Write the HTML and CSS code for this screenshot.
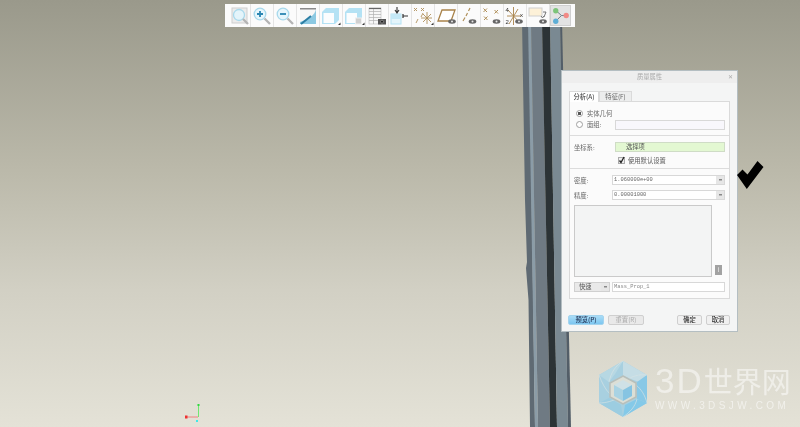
FILE: index.html
```html
<!DOCTYPE html>
<html lang="zh">
<head>
<meta charset="utf-8">
<title>质量属性</title>
<link rel="stylesheet" href="styles.css">
</head>
<body>
<main class="viewport">
  <svg class="model" width="60" height="427" viewBox="515 0 60 427">
    <polygon fill="#5f6a73" points="522,20 529,20 535,427 530,427 528.500,300 526,268 527,262 525,200"/>
    <polygon fill="#8b9ca7" points="528,20 531,20 538,427 535,427"/>
    <polygon fill="#6f7a83" points="531,20 542,20 550,427 538,427"/>
    <polygon fill="#2c3336" points="542,20 550,20 557,427 550,427"/>
    <polygon fill="#7a8992" points="550,20 560,20 568,427 557,427"/>
    <polygon fill="#535e68" points="560,20 562,20 571,427 568,427"/>
  </svg>

  <svg class="axes" width="20" height="22" viewBox="183 403 20 22">
    <line x1="186" y1="417" x2="198" y2="417" stroke="#f08080" stroke-width="1"/>
    <rect x="185" y="415.500" width="2.500" height="3" fill="#ee3030"/>
    <line x1="198.500" y1="405" x2="198.500" y2="417" stroke="#70e870" stroke-width="1"/>
    <rect x="197.500" y="404" width="2" height="2" fill="#30d840"/>
    <rect x="196" y="420" width="2" height="2" fill="#40e8e8"/>
  </svg>

  <nav class="toolbar">
    <span class="tool">
      <svg width="22" height="22" viewBox="0 0 22 22"><rect x="4" y="3" width="15" height="15" fill="#ececec" stroke="#cfcfcf"/><circle cx="11" cy="10" r="5.500" fill="#e4f4fa" stroke="#a8d9ec" stroke-width="1.300"/><line x1="15" y1="14" x2="20" y2="19" stroke="#b4b4b4" stroke-width="2.300"/></svg>
    </span>
    <span class="tool">
      <svg width="22" height="22" viewBox="0 0 22 22"><circle cx="9" cy="9" r="5.800" fill="#e6f6fc" stroke="#a8d9ec" stroke-width="1.300"/><path d="M6 9h6M9 6v6" stroke="#2a86b2" stroke-width="1.800"/><line x1="13.500" y1="13.500" x2="19" y2="19" stroke="#b4b4b4" stroke-width="2.300"/></svg>
    </span>
    <span class="tool">
      <svg width="22" height="22" viewBox="0 0 22 22"><circle cx="9" cy="9" r="5.800" fill="#e6f6fc" stroke="#a8d9ec" stroke-width="1.300"/><path d="M6 9h6" stroke="#2a86b2" stroke-width="1.800"/><line x1="13.500" y1="13.500" x2="19" y2="19" stroke="#b4b4b4" stroke-width="2.300"/></svg>
    </span>
    <span class="tool">
      <svg width="22" height="22" viewBox="0 0 22 22"><rect x="3" y="3" width="16" height="16" fill="#8cc9e2"/><path d="M3 4h16C18 10 12 14 3 17z" fill="#f6f6f6"/><path d="M3 3h16v1.500H3z" fill="#8a8a8a"/><path d="M4 19l10-8" stroke="#2b7da3" stroke-width="2"/></svg>
    </span>
    <span class="tool">
      <svg width="22" height="22" viewBox="0 0 22 22"><path d="M2 7l4-4h13v12l-4 4H2z" fill="#b4e2f4"/><rect x="3" y="7.500" width="11.500" height="11" fill="#fbfdfe" stroke="#b4e2f4"/><path d="M18 20l2.500-2.500V20z" fill="#333"/></svg>
    </span>
    <span class="tool">
      <svg width="22" height="22" viewBox="0 0 22 22"><path d="M2 7l4-4h13v12l-4 4H2z" fill="#b4e2f4"/><rect x="3" y="7.500" width="11.500" height="11" fill="#fbfdfe" stroke="#b4e2f4"/><rect x="12.500" y="13" width="6" height="6" fill="#d0d0d0" stroke="#eee"/><path d="M19 20l2.500-2.500V20z" fill="#333"/></svg>
    </span>
    <span class="tool">
      <svg width="22" height="22" viewBox="0 0 22 22"><rect x="3" y="3" width="12" height="16" fill="#f7f7f7" stroke="#c4c4c4" stroke-width=".7"/><path d="M3 3.500h12" stroke="#666" stroke-width="1.200"/><path d="M3 6.500h12M3 9.500h12M3 12.500h12M3 15.500h12M7.500 4v15" stroke="#b0b0b0" stroke-width=".7"/><rect x="12" y="14" width="8" height="5.500" fill="#555"/><circle cx="16" cy="16.700" r="1.500" fill="#222" stroke="#aaa" stroke-width=".6"/></svg>
    </span>
    <span class="tool">
      <svg width="22" height="22" viewBox="0 0 22 22"><rect x="2" y="9" width="10" height="10" fill="#e4f5fb" stroke="#b4e2f4"/><rect x="2" y="9" width="10" height="5" fill="#c4e8f6"/><path d="M8 2v5M6 5l2 3 2-3" stroke="#333" stroke-width="1.100" fill="none"/><path d="M14 11h5M14 9v4" stroke="#333" stroke-width="1.200"/></svg>
    </span>
    <span class="tool">
      <svg width="22" height="22" viewBox="0 0 22 22"><g stroke="#b0905a" stroke-width=".9" fill="none"><path d="M2 3l3 3M5 3L2 6M9 3l3 3M12 3L9 6M11 8l-2 4M6 14l-2 4"/><path d="M15 7v12M9 13h11M11 9l8 8M19 9l-8 8"/></g><path d="M19 20l2.500-2.500V20z" fill="#333"/></svg>
    </span>
    <span class="tool">
      <svg width="22" height="22" viewBox="0 0 22 22"><path d="M7 5h13l-4 11H3z" fill="#fff" stroke="#a9834a" stroke-width="1.300"/><ellipse cx="17" cy="16.500" rx="3.800" ry="2.200" fill="#666"/><circle cx="17" cy="16.500" r="1" fill="#e8e8e8"/></svg>
    </span>
    <span class="tool">
      <svg width="22" height="22" viewBox="0 0 22 22"><path d="M12 3l-1.500 3M9.500 8L8 11M7 12.500L5 16" stroke="#b0905a" stroke-width="1.200"/><ellipse cx="14.500" cy="16.500" rx="3.800" ry="2.200" fill="#666"/><circle cx="14.500" cy="16.500" r="1" fill="#e8e8e8"/></svg>
    </span>
    <span class="tool">
      <svg width="22" height="22" viewBox="0 0 22 22"><path d="M2.500 3.500l3.500 3.500M6 3.500L2.500 7M13.500 5l3.500 3.500M17 5l-3.500 3.500M3 11.500l3.500 3.500M6.500 11.500L3 15" stroke="#b0905a" stroke-width="1"/><ellipse cx="15.500" cy="16.500" rx="3.800" ry="2.200" fill="#666"/><circle cx="15.500" cy="16.500" r="1" fill="#e8e8e8"/></svg>
    </span>
    <span class="tool">
      <svg width="22" height="22" viewBox="0 0 22 22"><path d="M9.500 2v18M3 11h14M4 5l11 12M14 4L5 19" stroke="#a9834a" stroke-width=".9" fill="none"/><text x="1.500" y="7" class="icon-num">4</text><text x="1.500" y="19" class="icon-num">2</text><text x="16" y="12" class="icon-num">x</text><ellipse cx="15" cy="16.500" rx="3.800" ry="2.200" fill="#666"/><circle cx="15" cy="16.500" r="1" fill="#e8e8e8"/></svg>
    </span>
    <span class="tool">
      <svg width="22" height="22" viewBox="0 0 22 22"><rect x="2" y="3" width="13" height="8" fill="#fdf1d8" stroke="#cfcfcf"/><path d="M16 7h3l-2 5M17 11l-1.500 2-1.500-2" stroke="#666" stroke-width=".9" fill="none"/><ellipse cx="16" cy="16.500" rx="3.800" ry="2.200" fill="#666"/><circle cx="16" cy="16.500" r="1" fill="#e8e8e8"/></svg>
    </span>
    <span class="tool tool-active">
      <svg width="20" height="20" viewBox="0 0 20 20"><path d="M6 5l5 4.500-5 5M11 9.500h4" stroke="#6b7b86" stroke-width="1" fill="none"/><circle cx="5" cy="4.500" r="2.800" fill="#7dc47a"/><circle cx="16" cy="9.500" r="2.800" fill="#f28a86"/><circle cx="5" cy="15.500" r="2.800" fill="#5eaed6"/></svg>
    </span>
  </nav>

  <section class="dialog">
    <header class="dialog-title">
      <span class="dialog-name">质量属性</span>
      <span class="dialog-close">✕</span>
    </header>
    <div class="dialog-body">
      <div class="tabs">
        <span class="tab tab-on">分析(A)</span>
        <span class="tab">特征(F)</span>
      </div>
      <div class="panel">
        <div class="group group-a">
          <div class="row row-radio"><span class="radio radio-on"></span><span>实体几何</span></div>
          <div class="row row-radio"><span class="radio"></span><span class="radio-label">面组:</span><span class="field field-lilac"></span></div>
        </div>
        <div class="group group-b">
          <div class="row row-coord"><span class="label">坐标系:</span><span class="field field-green">选择项</span></div>
          <div class="row row-check">
            <svg class="check" width="7" height="8" viewBox="0 0 7 8"><rect x=".5" y="1.500" width="6" height="6" fill="#eee" stroke="#aaa"/><path d="M1.500 4.500L3 6.500 6 1" stroke="#222" stroke-width="1.300" fill="none"/></svg>
            <span>使用默认设置</span>
          </div>
        </div>
        <div class="group group-c">
          <div class="row row-select"><span class="label-short">密度:</span><span class="field field-select"><span class="value">1.060000e+00</span><span class="arrow"></span></span></div>
          <div class="row row-select"><span class="label-short">精度:</span><span class="field field-select"><span class="value">0.00001000</span><span class="arrow"></span></span></div>
          <div class="row row-output"><div class="output"></div><span class="info">i</span></div>
          <div class="row row-name"><span class="quick"><span class="quick-text">快速</span><span class="arrow"></span></span><span class="field field-name">Mass_Prop_1</span></div>
        </div>
      </div>
      <footer class="actions">
        <span class="btn btn-primary">预览(P)</span>
        <span class="btn btn-disabled">重置(R)</span>
        <span class="spacer"></span>
        <span class="btn btn-ok">确定</span>
        <span class="btn btn-cancel">取消</span>
      </footer>
    </div>
  </section>

  <svg class="tick" width="28" height="30" viewBox="736 160 28 30"><polygon fill="#000" points="737,175 742.500,169.500 747.500,174.500 757.500,161 763.500,167 746.800,189"/></svg>

  <div class="logo">
    <svg width="52" height="58" viewBox="0 0 52 58">
      <polygon points="26,1 50,15 50,43 26,57 2,43 2,15" fill="#a8d0e0"/>
      <path d="M26 1l24 14-8 7-16-6z" fill="#c5dde5"/>
      <path d="M50 15v28l-10-4v-17z" fill="#88c8e6"/>
      <path d="M2 15L26 1 18 14 12 22z" fill="#b7d8e3"/>
      <path d="M26 57l24-14-10-4-12 6z" fill="#84c9e8"/>
      <path d="M2 43l24 14-2-12-12-7z" fill="#9ccde1"/>
      <path d="M26 1c-8 5-12 12-14 21M50 15c-8-1-15 1-22 6M50 43c-2-8-6-14-11-18M26 57c7-5 12-10 14-18M2 43c7 0 14-2 21-6M2 15c3 8 6 14 11 19" stroke="#d5e3e4" stroke-width=".7" fill="none"/>
      <path d="M26 16l13 7v14l-13 7-13-7V23z" fill="#dcdfd6" stroke="#b8bfba" stroke-width="1.500"/>
      <path d="M26 20l9 5-9 5-9-5z" fill="#cfe1e6"/>
      <path d="M26 30l9-5v11l-9 5z" fill="#86c4e2"/>
      <path d="M26 30l-9-5v11l9 5z" fill="#a9d3e3"/>
    </svg>
    <div class="logo-words">
      <div class="logo-main"><span class="logo-3d">3D</span>世界网</div>
      <div class="logo-sub">WWW.3DSJW.COM</div>
    </div>
  </div>
</main>
</body>
</html>
```

FILE: styles.css
```css
* { box-sizing: border-box; }
html, body { margin: 0; padding: 0; }
body {
  width: 800px;
  height: 427px;
  overflow: hidden;
  font-family: "Noto Sans CJK SC", "Liberation Sans", sans-serif;
  font-size: 6.300px;
  color: #666;
}
.viewport {
  position: relative;
  width: 800px;
  height: 427px;
  overflow: hidden;
  background: linear-gradient(180deg, #9a998b 0%, #bbb9aa 40%, #d2d0c4 68%, #e4e2d7 100%);
}
.model { position: absolute; left: 515px; top: 0; filter: blur(.4px); }
.axes { position: absolute; left: 183px; top: 403px; }
.tick { position: absolute; left: 736px; top: 160px; }

.toolbar {
  position: absolute;
  left: 225px;
  top: 4px;
  width: 350px;
  height: 23px;
  display: flex;
  padding: 0 0 0 3px;
  background: #fbfbfb;
  filter: blur(.3px);
}
.tool {
  width: 23px;
  height: 23px;
  display: flex;
  align-items: center;
  justify-content: center;
  border-right: 1px solid #e4e4e4;
  flex: none;
}
.tool-active {
  width: 21px;
  height: 21px;
  margin-top: 1px;
  background: #e3e3e3;
  border: 1px solid #cfcfcf;
}
.icon-num { font: 6px "Liberation Sans", sans-serif; fill: #333; }

.dialog {
  position: absolute;
  left: 561px;
  top: 70px;
  width: 177px;
  height: 262px;
  background: #f4f5f5;
  border: 1px solid #b4bec2;
  display: flex;
  flex-direction: column;
  filter: blur(.3px);
}
.dialog-title {
  height: 12px;
  position: relative;
  display: flex;
  align-items: center;
  justify-content: center;
  background: #eeeeee;
  color: #a8a8a8;
}
.dialog-name { line-height: 12px; }
.dialog-close { position: absolute; right: 4px; top: 0; line-height: 12px; color: #aaa; font-size: 6px; }
.dialog-body { padding: 8px 7px 0; flex: 1; display: flex; flex-direction: column; }
.tabs { display: flex; height: 10px; position: relative; z-index: 1; }
.tab {
  width: 33px;
  height: 10px;
  line-height: 9px;
  text-align: center;
  white-space: nowrap;
  background: #eceded;
  border: 1px solid #dadada;
  border-bottom: 0;
  color: #666;
}
.tab-on { background: #fff; height: 11px; width: 30px; color: #444; font-weight: 500; }
.panel {
  height: 198px;
  background: #fbfbfb;
  border: 1px solid #dadada;
  display: flex;
  flex-direction: column;
}
.group { padding: 0 4px; }
.group-a { height: 34px; padding-top: 6px; border-bottom: 1px solid #dcdcdc; }
.group-b { height: 33px; padding-top: 6px; border-bottom: 1px solid #dcdcdc; }
.group-c { padding-top: 6px; }
.row { display: flex; align-items: center; }
.row-radio { height: 11px; padding-left: 2px; gap: 4px; }
.radio {
  width: 7px;
  height: 7px;
  border-radius: 50%;
  background: #fff;
  border: 1px solid #a0a0a0;
  flex: none;
}
.radio-on { background: radial-gradient(circle, #555 0 1.500px, #fff 2px); }
.radio-label { width: 28px; }
.field { display: block; flex: 1; background: #fff; border: 1px solid #d8d8d8; line-height: 8px; }
.row-radio .field { margin-left: -4px; }
.field-lilac { height: 10px; background: #f8f7fc; }
.row-coord { height: 10px; }
.label { width: 41px; }
.field-green {
  height: 10px;
  background: #e3f8d2;
  padding-left: 10px;
  border-color: #cfdcc6;
  color: #555;
}
.row-check { height: 10px; margin-top: 3px; padding-left: 44px; gap: 3px; color: #555; }
.check { flex: none; }
.label-short { width: 38px; }
.row-select { height: 10px; margin-bottom: 5px; }
.field-select {
  height: 10px;
  display: flex;
  align-items: center;
  justify-content: space-between;
  font-family: "Liberation Mono", monospace;
  font-size: 5.400px;
  padding-left: 1px;
}
.value { line-height: 8px; }
.arrow {
  width: 8px;
  height: 8px;
  flex: none;
  background: #e6e6e6 linear-gradient(#888, #888) no-repeat center / 3px 1.500px;
}
.row-output { align-items: flex-end; gap: 3px; height: 72px; margin-top: 1px; }
.output { width: 138px; height: 72px; background: #f3f4f4; border: 1px solid #cacaca; }
.info {
  width: 7px;
  height: 10px;
  margin-bottom: 2px;
  background: #a2a2a2;
  color: #eee;
  text-align: center;
  font: 7px/10px "Liberation Sans", sans-serif;
}
.row-name { height: 10px; margin-top: 5px; gap: 2px; }
.quick {
  width: 36px;
  height: 10px;
  display: flex;
  align-items: center;
  justify-content: space-between;
  background: #e9e9e9;
  border: 1px solid #d0d0d0;
  color: #555;
}
.quick-text { padding-left: 4px; line-height: 8px; }
.field-name { height: 10px; padding-left: 1px; font-family: "Liberation Mono", monospace; font-size: 5.400px; color: #888; }
.actions { display: flex; align-items: center; margin-top: 16px; height: 10px; margin-left: -1px; gap: 4px; }
.btn {
  height: 10px;
  line-height: 8px;
  text-align: center;
  white-space: nowrap;
  border: 1px solid #cfcfcf;
  border-radius: 2px;
  background: #f0f0f0;
  color: #333;
  font-weight: 500;
}
.btn-primary { width: 36px; background: linear-gradient(#a9dcf7, #7cc6f0); border-color: #a4d4ee; color: #235; }
.btn-disabled { width: 36px; color: #aaa; background: #e9e9e9; font-weight: 400; }
.btn-ok { width: 25px; }
.btn-cancel { width: 24px; }
.spacer { flex: 1; }

.logo { position: absolute; left: 597px; top: 360px; display: flex; gap: 6px; filter: blur(.3px); }
.logo-words { color: rgba(255,255,255,.5); width: 145px; }
.logo-main {
  font-family: "Liberation Sans", "Noto Sans CJK SC", sans-serif;
  font-size: 29px;
  line-height: 31px;
  height: 33px;
  margin-top: 5px;
  white-space: nowrap;
}
.logo-3d { font-size: 35px; letter-spacing: 2px; line-height: 31px; }
.logo-sub {
  font-family: "Liberation Sans", sans-serif;
  font-size: 10px;
  line-height: 10px;
  letter-spacing: 3.400px;
  margin-top: 3px;
  color: rgba(255,255,255,.55);
  white-space: nowrap;
}
```
